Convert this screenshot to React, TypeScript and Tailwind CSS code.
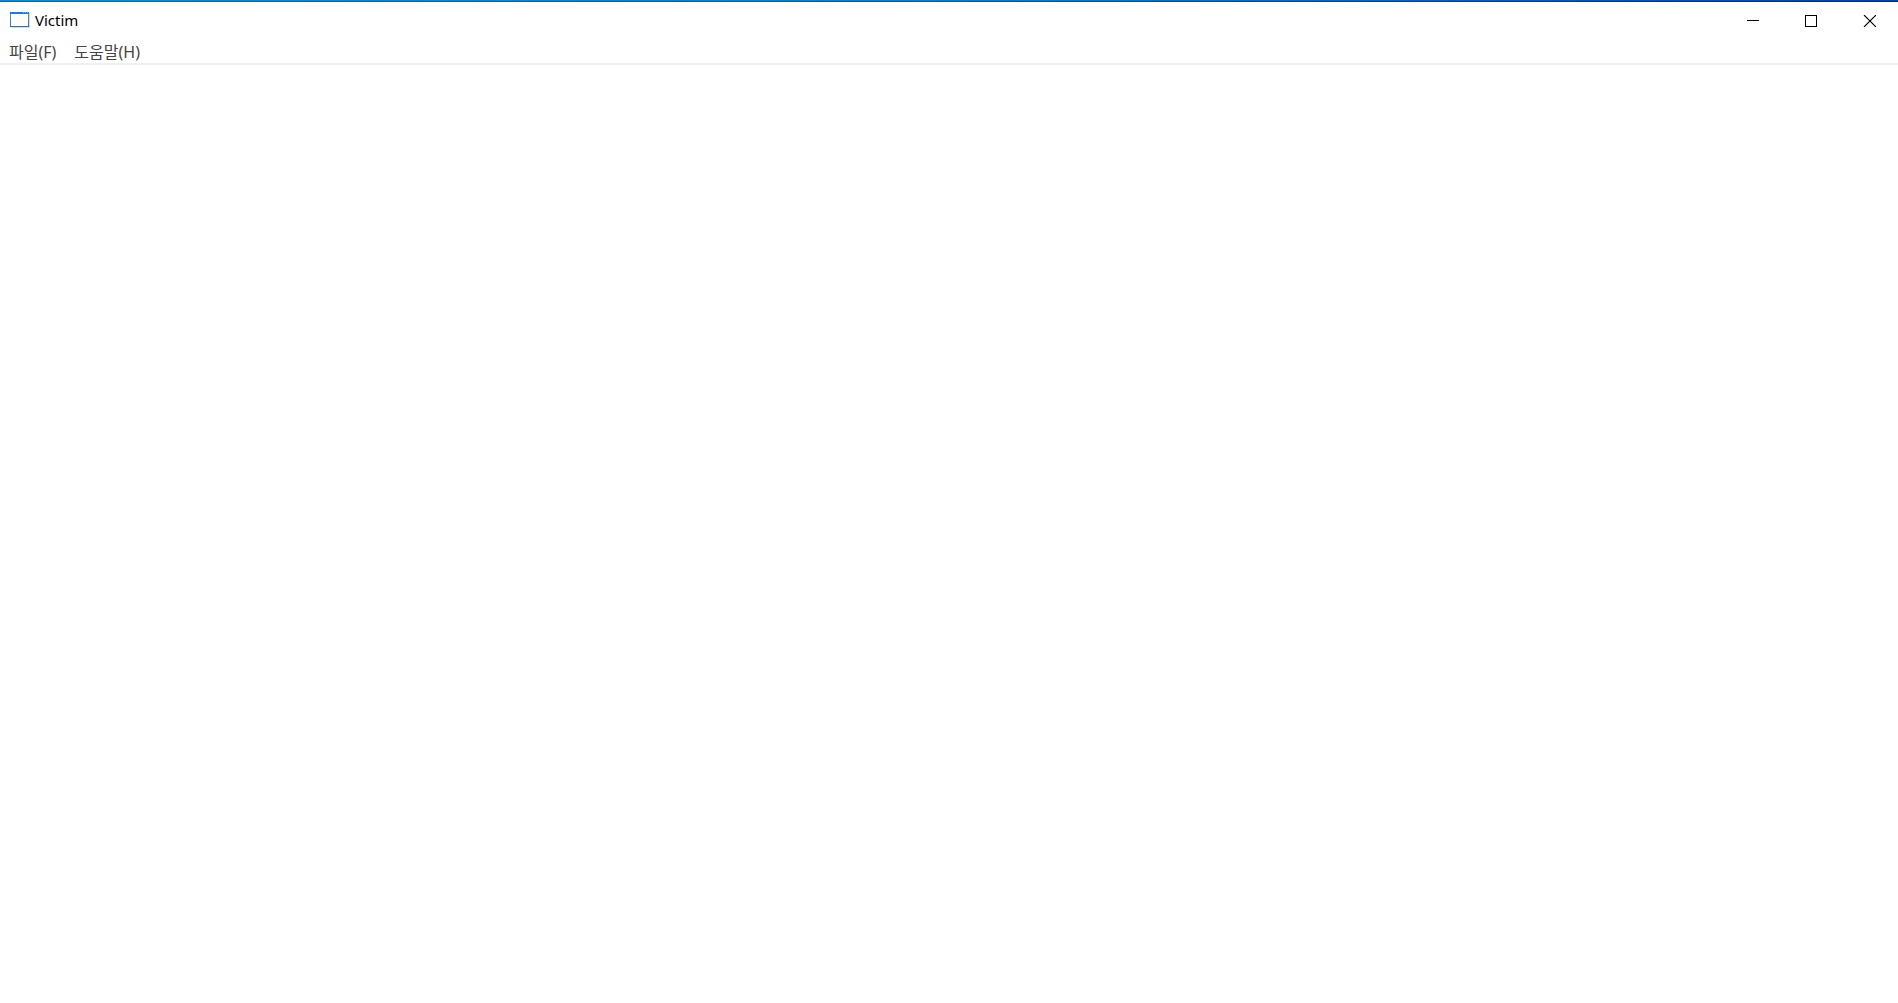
import { useState } from "react";

const menus = [
  { id: "file", label: "파일(F)" },
  { id: "help", label: "도움말(H)" },
];

const AppIcon = () => (
  <svg width="20" height="16" viewBox="0 0 20 16" shapeRendering="crispEdges">
    <defs>
      <linearGradient id="frame" x1="0" y1="0" x2="0" y2="1">
        <stop offset="0" stopColor="#4a9be6" />
        <stop offset="1" stopColor="#4068b4" />
      </linearGradient>
    </defs>
    <rect x="1" y="1" width="19" height="15" fill="#d9dce2" />
    <rect width="19" height="15" fill="url(#frame)" />
    <rect x="1" y="2" width="17" height="12" fill="#fdfdf8" />
    <rect width="19" height="2" fill="#1c7bd8" />
    <rect x="13" width="1" height="1" fill="#7fb8ee" />
    <rect x="15" width="1" height="1" fill="#7fb8ee" />
    <rect x="17" width="1" height="1" fill="#7fb8ee" />
  </svg>
);

export default function App() {
  const [open, setOpen] = useState("");

  return (
    <div className="min-h-screen flex flex-col bg-white text-black font-['Noto_Sans','Noto_Sans_CJK_KR',sans-serif]">
      <div className="h-px bg-linear-to-r from-[#0091d5] from-0% via-[#0082d2] via-50% to-[#0043b4]" />
      <div className="h-px bg-linear-to-r from-[#006fa5] from-0% via-[#005c9c] via-50% to-[#002a7c]" />
      <header className="flex h-[38px] items-center justify-between">
        <div className="flex items-center gap-[5px] pb-0.5 pl-[10px]">
          <AppIcon />
          <h1 className="text-[15px] leading-5">Victim</h1>
        </div>
        <div className="flex self-stretch">
          <button
            type="button"
            aria-label="최소화"
            className="flex w-[58px] items-center justify-center hover:bg-gray-200"
          >
            <svg width="12" height="12" viewBox="0 0 12 12">
              <rect y="5" width="12" height="1" />
            </svg>
          </button>
          <button
            type="button"
            aria-label="최대화"
            className="flex w-[58px] items-center justify-center hover:bg-gray-200"
          >
            <svg width="12" height="12" viewBox="0 0 12 12">
              <rect x="0.5" y="0.5" width="11" height="11" fill="none" stroke="black" />
            </svg>
          </button>
          <button
            type="button"
            aria-label="닫기"
            className="flex w-[58px] items-center justify-center hover:bg-red-500"
          >
            <svg width="14" height="12" viewBox="0 0 14 12">
              <path d="M2 0L14 12M14 0L2 12" stroke="black" strokeWidth="1.1" />
            </svg>
          </button>
        </div>
      </header>
      <nav className="flex h-[25px] items-end gap-[18px] border-b-2 border-[#f0f0f0] pb-px pl-[9px]">
        {menus.map((menu) => (
          <button
            key={menu.id}
            type="button"
            aria-expanded={open === menu.id}
            onClick={() => setOpen(open === menu.id ? "" : menu.id)}
            className="text-base leading-5 text-[#444]"
          >
            {menu.label}
          </button>
        ))}
      </nav>
      <main className="flex-1" />
    </div>
  );
}
